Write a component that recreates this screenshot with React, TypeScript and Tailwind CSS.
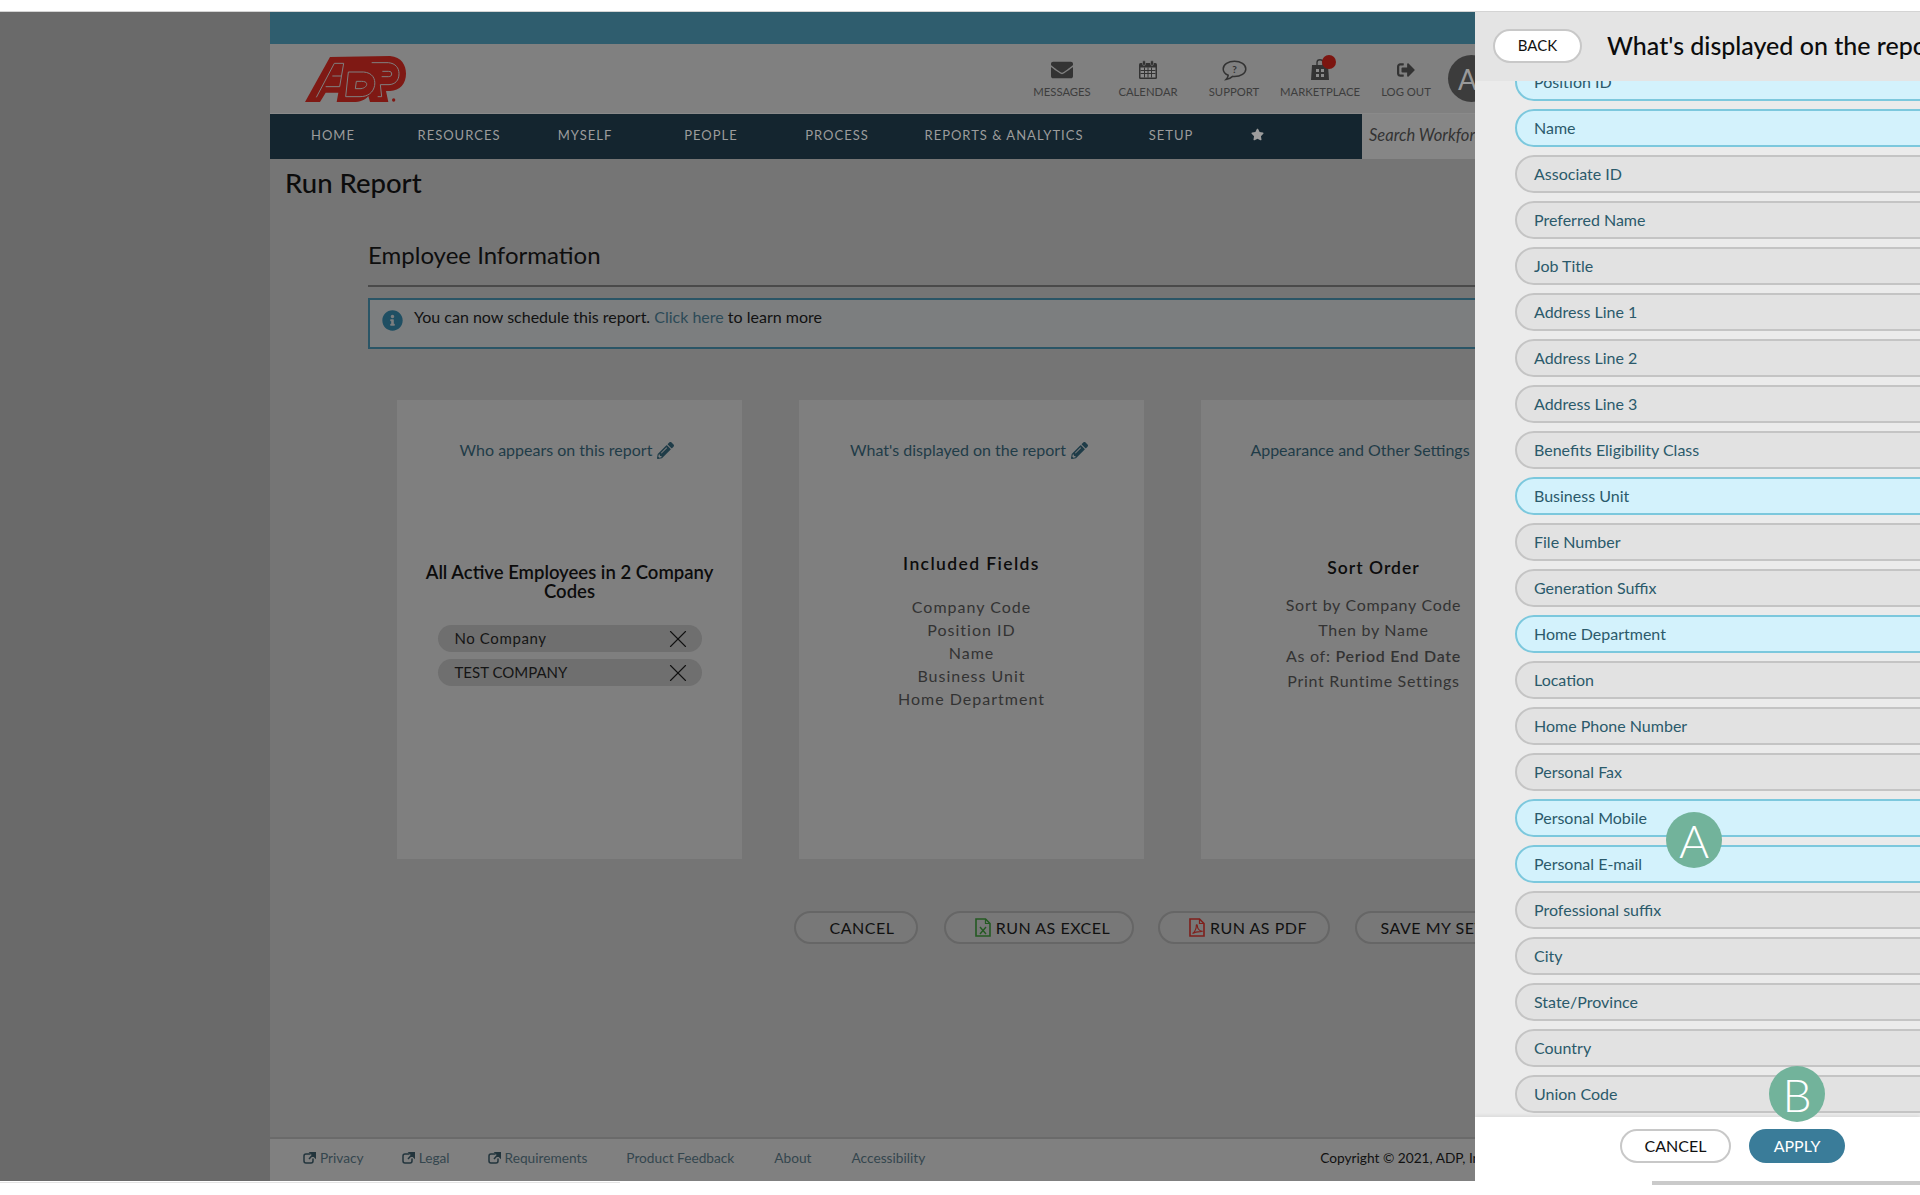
import { FaEnvelope, FaPencilAlt, FaStar, FaInfoCircle, FaSignOutAlt } from "react-icons/fa";
import { X } from "lucide-react";

const selected = ["Position ID", "Name", "Business Unit", "Home Department", "Personal Mobile", "Personal E-mail"];
const fields = [
  "Position ID", "Name", "Associate ID", "Preferred Name", "Job Title", "Address Line 1", "Address Line 2",
  "Address Line 3", "Benefits Eligibility Class", "Business Unit", "File Number", "Generation Suffix",
  "Home Department", "Location", "Home Phone Number", "Personal Fax", "Personal Mobile", "Personal E-mail",
  "Professional suffix", "City", "State/Province", "Country", "Union Code",
];

function AdpLogo() {
  return (
    <svg width="101" height="46" viewBox="0 0 303 138" className="block">
      <path
        d="M0 138 L75 3 L255 0 C290 3 303 28 303 53 C303 83 285 103 255 105 L243 105 L250 138 L195 138 L190 120 C180 132 165 138 145 138 L95 138 L100 110 L62 110 L45 138 Z"
        fill="#7f1914"
      />
      <path
        d="M34 124 L88 22 L116 22 L104 92 L62 92 M82 60 L108 60 M122 122 L130 48 L176 48 C202 50 212 68 209 88 C205 110 188 122 165 122 Z M154 76 L151 98 L168 98 C180 96 186 90 185 83 C184 78 178 76 170 76 Z M200 20 L250 20 C272 22 282 36 282 53 C282 74 270 85 252 86 L226 86 L230 122 L218 122 M232 46 L250 46 C258 46 260 49 260 54 C260 59 257 62 250 62 L230 62"
        fill="none"
        stroke="#808080"
        strokeWidth="3"
      />
      <circle cx="266" cy="132" r="5" fill="#7f1914" />
    </svg>
  );
}

function CalendarIcon() {
  return (
    <svg width="20" height="20" viewBox="0 0 20 20" fill="none">
      <rect x="1" y="3" width="18" height="16" rx="1.5" fill="#333" />
      <rect x="2.5" y="7.5" width="15" height="10" fill="#8a8a8a" />
      <path d="M2.5 10.5h15M2.5 13.5h15M6.5 7.5v10M10 7.5v10M13.5 7.5v10" stroke="#333" strokeWidth="1" />
      <rect x="4.5" y="0.5" width="3" height="5" rx="1.5" fill="#333" stroke="#808080" strokeWidth="0.6" />
      <rect x="12.5" y="0.5" width="3" height="5" rx="1.5" fill="#333" stroke="#808080" strokeWidth="0.6" />
    </svg>
  );
}

function SupportIcon() {
  return (
    <svg width="25" height="21" viewBox="0 0 25 21" fill="none">
      <path
        d="M12.5 1.2C6.3 1.2 1.2 4.6 1.2 8.9c0 2.7 2 5 5 6.4-.2 1.6-1 3-2.2 4.2 2.7-.3 5-1.6 6.6-3.1.6.1 1.3.1 1.9.1 6.2 0 11.3-3.4 11.3-7.6S18.7 1.200 12.500 1.200Z"
        stroke="#333"
        strokeWidth="1.5"
      />
      <text x="12.500" y="12.500" textAnchor="middle" fontSize="10" fontWeight="700" fill="#333">?</text>
    </svg>
  );
}

function BagIcon() {
  return (
    <svg width="20" height="22" viewBox="0 0 20 22">
      <path d="M7 6V3.500C7 1.500 8.300 .8 10 .8s3 .7 3 2.700V6" fill="none" stroke="#333" strokeWidth="1.400" />
      <path d="M2 6h16l1 15H1Z" fill="#333" />
      <path d="M6 10h3v3H6ZM11 10h3v3h-3ZM6 15h3v3H6ZM11 15h3v3h-3Z" fill="#8a8a8a" />
    </svg>
  );
}

function ExcelIcon() {
  return (
    <svg width="16" height="19" viewBox="0 0 16 19" fill="none" className="shrink-0">
      <path d="M1 1h9.500L15 5.500V18H1Z" stroke="#245a22" strokeWidth="1.600" />
      <path d="M10.500 1v4.500H15" stroke="#245a22" strokeWidth="1.200" />
      <path d="M5 9l6 7M11 9l-6 7" stroke="#245a22" strokeWidth="1.400" />
    </svg>
  );
}

function PdfIcon() {
  return (
    <svg width="16" height="19" viewBox="0 0 16 19" fill="none" className="shrink-0">
      <path d="M1 1h9.500L15 5.500V18H1Z" stroke="#7f1f1b" strokeWidth="1.600" />
      <path d="M10.500 1v4.500H15" stroke="#7f1f1b" strokeWidth="1.200" />
      <path d="M3.500 15.500C6 14 7.500 10 7.300 7.500 7.200 6.500 8.300 6.500 8.300 7.500 8.300 10 10 13 13 13.300 12 14 8 13 3.500 15.500Z" stroke="#7f1f1b" strokeWidth="1.100" />
    </svg>
  );
}

function OutIcon() {
  return (
    <svg width="13" height="12" viewBox="0 0 13 12" fill="none" className="shrink-0">
      <path d="M7.500 2H3C1.800 2 1 2.800 1 4v5c0 1.200.8 2 2 2h5c1.200 0 2-.8 2-2V6.500" stroke="#22343c" strokeWidth="1.500" />
      <path d="M6 7l5-5.500M7.500 .8H12.300V5.500Z" stroke="#22343c" strokeWidth="1.500" fill="#22343c" />
    </svg>
  );
}

function TopIcon({ label, children, dot }: { label: string; children: React.ReactNode; dot?: boolean }) {
  return (
    <div className="relative w-[86px] flex flex-col items-center">
      <div className="h-[24px] flex items-center justify-center text-[#333]">{children}</div>
      {dot && <span className="absolute left-[45px] top-[-3px] w-[14px] h-[14px] rounded-full bg-[#7c1510]" />}
      <span className="mt-[3px] text-[11.300px] leading-[14px] text-[#3d3d3d] whitespace-nowrap">{label}</span>
    </div>
  );
}

function NavItem({ w, children }: { w: string; children: React.ReactNode }) {
  return <div className={`${w} text-center whitespace-nowrap`}>{children}</div>;
}

function Card({ title, children }: { title: string; children: React.ReactNode }) {
  return (
    <div className="w-[345px] h-[459px] shrink-0 bg-[#7f7f7f] px-[24px] flex flex-col items-center">
      <div className="mt-[40px] -ml-[5px] h-[20px] flex items-center gap-[5px] text-[16px] leading-[20px] text-[#1f3c48] whitespace-nowrap">
        {title}
        <FaPencilAlt size={17} className="text-[#1f3c48]" />
      </div>
      {children}
    </div>
  );
}

function Chip({ label, spaced }: { label: string; spaced?: boolean }) {
  return (
    <div className="w-[264px] h-[27px] rounded-full bg-[#6f6f6f] pl-[17px] pr-[9px] flex items-center justify-between">
      <span className={`text-[15px] text-[#151515] ${spaced ? "tracking-[0.6px]" : ""}`}>{label}</span>
      <X size={30} strokeWidth={0.9} className="text-[#111]" />
    </div>
  );
}

function PillButton({ w, pl, children }: { w: string; pl: string; children: React.ReactNode }) {
  return (
    <div className={`${w} ${pl} h-[33px] shrink-0 rounded-full border-2 border-[#666] bg-[#787878] flex items-center justify-center gap-[5px] text-[16px] tracking-[0.5px] text-[#111] whitespace-nowrap`}>
      {children}
    </div>
  );
}

function FooterLink({ label, ml, ext }: { label: string; ml: string; ext?: boolean }) {
  return (
    <div className={`${ml} flex items-center gap-[4px] text-[13.700px] text-[#34464e] whitespace-nowrap`}>
      {ext && <OutIcon />}
      {label}
    </div>
  );
}

export default function App() {
  return (
    <div className="relative w-[1920px] h-[1195px] overflow-hidden bg-white [font-family:Lato,sans-serif]">
      <div className="h-3 border-b border-[#d4d4d4]" />
      <div className="flex h-[1169px]">
        <div className="w-[270px] shrink-0 bg-[#6a6a6a]" />
        <div className="flex-1 flex flex-col bg-[#757575] overflow-hidden">
          <div className="h-[32px] bg-[#2f5d6e]" />
          <div className="h-[69px] bg-[#808080] flex items-center pl-[35px] pr-[425px]">
            <AdpLogo />
            <div className="ml-auto flex items-center">
              <TopIcon label="MESSAGES"><FaEnvelope size={22} /></TopIcon>
              <TopIcon label="CALENDAR"><CalendarIcon /></TopIcon>
              <TopIcon label="SUPPORT"><SupportIcon /></TopIcon>
              <TopIcon label="MARKETPLACE" dot><BagIcon /></TopIcon>
              <TopIcon label="LOG OUT"><FaSignOutAlt size={18} /></TopIcon>
              <div className="w-[47px] h-[47px] -ml-px rounded-full bg-[#3c3c3c] flex items-center pl-[10px] text-[28px] text-[#999]">AD</div>
            </div>
          </div>
          <div className="h-[46px] flex border-t border-[#8a8a8a]">
            <div className="w-[1092px] bg-[#14252f] flex items-center pb-[2px] text-[13px] tracking-[1px] text-[#9c9c9c]">
              <NavItem w="w-[126px]">HOME</NavItem>
              <NavItem w="w-[126px]">RESOURCES</NavItem>
              <NavItem w="w-[126px]">MYSELF</NavItem>
              <NavItem w="w-[126px]">PEOPLE</NavItem>
              <NavItem w="w-[126px]">PROCESS</NavItem>
              <NavItem w="w-[208px]">REPORTS &amp; ANALYTICS</NavItem>
              <NavItem w="w-[126px]">SETUP</NavItem>
              <div className="w-[46px] flex justify-center -mt-[2px]"><FaStar size={13} /></div>
            </div>
            <div className="flex-1 bg-[#868686] flex items-center pl-[7px] pb-[2px] italic text-[16.500px] text-[#333]">Search Workforce Now</div>
          </div>

          <div className="flex-1 min-h-0">
            <h1 className="mt-[8px] ml-[15px] text-[27.500px] leading-[32px] font-medium text-[#0c0c0c]">Run Report</h1>
            <div className="ml-[98px] w-[1300px]">
              <h2 className="mt-[40px] h-[46px] text-[24px] leading-[32px] text-[#0e0e0e]">Employee Information</h2>
              <div className="h-[2px] bg-[#4a4a4a]" />
              <div className="mt-[11px] h-[51px] border-2 border-[#2a5566] bg-[#7c7e7f] flex items-start pl-[12px] pt-[7px] text-[16px] leading-[20px] text-[#111]">
                <FaInfoCircle size={21} className="mt-[3px] mr-[11px] text-[#1f4f63] shrink-0" />
                <span>You can now schedule this report. <span className="text-[#2c4a57]">Click here</span> to learn more</span>
              </div>
              <div className="ml-[29px] mt-[51px] flex gap-[57px]">
                <Card title="Who appears on this report">
                  <div className="mt-[103px] text-center text-[18.500px] leading-[19px] font-semibold text-[#0c0c0c]">All Active Employees in 2 Company Codes</div>
                  <div className="mt-[24px] flex flex-col gap-[7px]">
                    <Chip label="No Company" spaced />
                    <Chip label="TEST COMPANY" />
                  </div>
                </Card>
                <Card title="What's displayed on the report">
                  <div className="mt-[94px] text-[17.500px] leading-[20px] font-semibold tracking-[1.400px] text-[#0c0c0c]">Included Fields</div>
                  <div className="mt-[21px] flex flex-col items-center text-[16px] leading-[23px] tracking-[1px] text-[#333]">
                    <span>Company Code</span>
                    <span>Position ID</span>
                    <span>Name</span>
                    <span>Business Unit</span>
                    <span>Home Department</span>
                  </div>
                </Card>
                <Card title="Appearance and Other Settings">
                  <div className="mt-[98px] text-[17.500px] leading-[20px] font-semibold tracking-[1px] text-[#0c0c0c]">Sort Order</div>
                  <div className="mt-[14px] flex flex-col items-center text-[16px] leading-[25.300px] tracking-[0.700px] text-[#333]">
                    <span>Sort by Company Code</span>
                    <span>Then by Name</span>
                    <span>As of: <b className="font-semibold">Period End Date</b></span>
                    <span>Print Runtime Settings</span>
                  </div>
                </Card>
              </div>
              <div className="ml-[426px] mt-[52px] flex">
                <PillButton w="w-[124px]" pl="pl-[12px]">CANCEL</PillButton>
                <div className="w-[26px] shrink-0" />
                <PillButton w="w-[190px]" pl="pl-[7px]"><ExcelIcon />RUN AS EXCEL</PillButton>
                <div className="w-[24px] shrink-0" />
                <PillButton w="w-[172px]" pl="pl-[8px]"><PdfIcon />RUN AS PDF</PillButton>
                <div className="w-[25px] shrink-0" />
                <PillButton w="w-[204px]" pl="">SAVE MY SETTINGS</PillButton>
              </div>
            </div>
          </div>

          <div className="h-[44px] shrink-0 border-t-2 border-[#6a6a6a] bg-[#808080] flex items-center pl-[33px] pb-[4px]">
            <FooterLink label="Privacy" ext ml="" />
            <FooterLink label="Legal" ext ml="ml-[38px]" />
            <FooterLink label="Requirements" ext ml="ml-[38px]" />
            <FooterLink label="Product Feedback" ml="ml-[39px]" />
            <FooterLink label="About" ml="ml-[40px]" />
            <FooterLink label="Accessibility" ml="ml-[40px]" />
            <span className="ml-[395px] text-[13.700px] text-[#111] whitespace-nowrap">Copyright © 2021, ADP, Inc.</span>
          </div>
        </div>
      </div>
      <div className="h-[14px] flex">
        <div className="w-[620px] h-px bg-[#e4e4e4] mt-[1px]" />
        <div className="w-[1032px]" />
        <div className="flex-1 h-[4px] bg-[#cacaca]" />
      </div>

      <div className="absolute left-[1475px] top-3 w-[445px] h-[1169px] bg-[#ebebeb] flex flex-col overflow-hidden">
        <div className="relative z-10 h-[69px] shrink-0 bg-[#e4e4e4] flex items-center pl-[18px] pb-[2px] gap-[25px] whitespace-nowrap">
          <div className="w-[89px] h-[34px] shrink-0 rounded-full border-2 border-[#c8c8c8] bg-white flex items-center justify-center text-[15px] text-[#111]">BACK</div>
          <div className="text-[25px] font-medium text-[#0c0c0c]">What's displayed on the report</div>
        </div>
        <div className="flex-1 min-h-0 overflow-hidden">
          <div className="-mt-[18px] pl-[40px] flex flex-col gap-[8px]">
            {fields.map((f) => (
              <div
                key={f}
                className={`w-[480px] h-[38px] shrink-0 rounded-l-full border-2 pl-[17px] pb-[1px] flex items-center text-[16px] text-[#2b5a6b] ${
                  selected.includes(f) ? "bg-[#d3f2fc] border-[#7cc8dd]" : "bg-[#e2e2e2] border-[#c4c4c4]"
                }`}
              >
                {f}
              </div>
            ))}
          </div>
        </div>
        <div className="h-[64px] shrink-0 bg-white shadow-[0_-2px_3px_rgba(0,0,0,0.06)] flex items-center pl-[145px] pb-[6px]">
          <div className="w-[111px] h-[34px] rounded-full border-2 border-[#c8c8c8] bg-white flex items-center justify-center text-[16px] text-[#111]">CANCEL</div>
          <div className="ml-[18px] w-[96px] h-[34px] rounded-full bg-[#3a7c99] flex items-center justify-center text-[16px] text-white">APPLY</div>
        </div>
      </div>

      <div className="absolute left-[1666px] top-[812px] w-[56px] h-[56px] rounded-full bg-[#72b39b] flex items-center justify-center text-[46px] font-light text-white">A</div>
      <div className="absolute left-[1769px] top-[1066px] w-[56px] h-[56px] rounded-full bg-[#72b39b] flex items-center justify-center text-[46px] font-light text-white">B</div>
    </div>
  );
}
